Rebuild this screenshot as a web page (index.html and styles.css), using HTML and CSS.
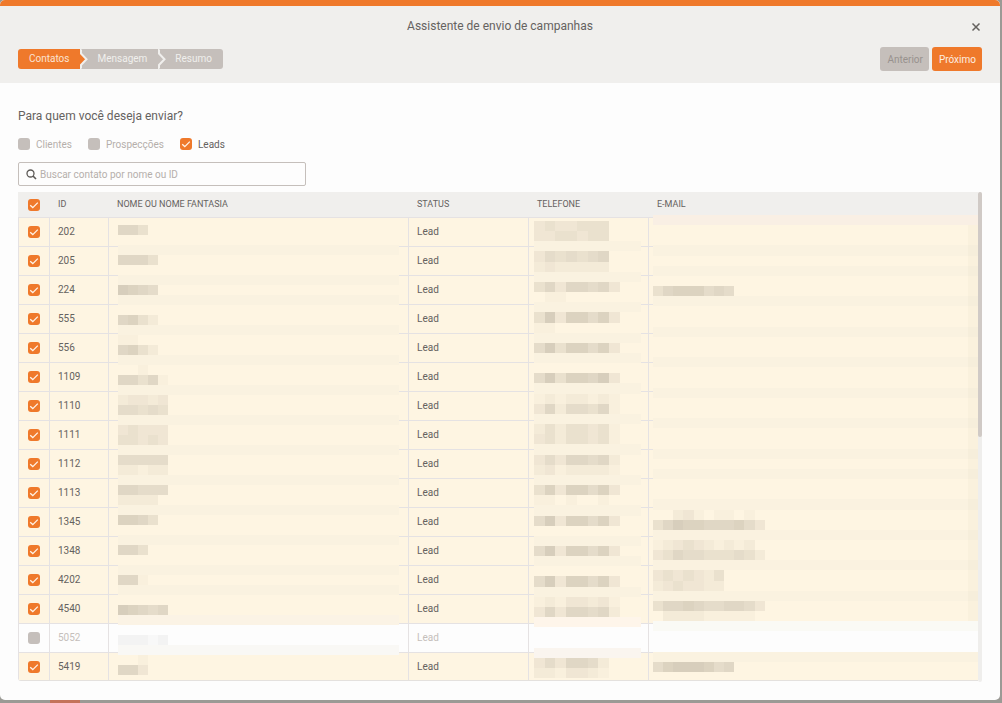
FILE: index.html
```html
<!DOCTYPE html>
<html lang="pt-BR">
<head>
<meta charset="utf-8">
<title>Assistente de envio de campanhas</title>
<link rel="stylesheet" href="styles.css">
</head>
<body>
<main class="modal">
  <header class="modal-header">
    <div class="title-bar">
      <h1 class="title">Assistente de envio de campanhas</h1>
      <button class="close" type="button" aria-label="Fechar">
        <svg width="10" height="10" viewBox="0 0 10 10"><path d="M1.5 1.5l7 7M8.5 1.5l-7 7" stroke="#65625f" stroke-width="1.5" fill="none"/></svg>
      </button>
    </div>
    <div class="toolbar">
      <ol class="steps">
        <li class="step step-active">Contatos
          <svg class="step-arrow" width="8" height="20" viewBox="0 0 8 20"><path d="M0 3L6 10L0 17Z" fill="#ef792b"/><path d="M0 0L1 1.5V4.5L6.5 10.2L1 16V18.5L0 20" fill="none" stroke="#f0efed" stroke-width="2"/></svg>
        </li>
        <li class="step">Mensagem
          <svg class="step-arrow" width="8" height="20" viewBox="0 0 8 20"><path d="M0 3L6 10L0 17Z" fill="#c5bfbb"/><path d="M0 0L1 1.5V4.5L6.5 10.2L1 16V18.5L0 20" fill="none" stroke="#f0efed" stroke-width="2"/></svg>
        </li>
        <li class="step">Resumo</li>
      </ol>
      <div class="actions">
        <button class="btn btn-muted" type="button">Anterior</button>
        <button class="btn btn-primary" type="button">Próximo</button>
      </div>
    </div>
  </header>
  <section class="content">
    <h2 class="question">Para quem você deseja enviar?</h2>
    <div class="filters">
      <label class="filter"><input class="check" type="checkbox">Clientes</label>
      <label class="filter"><input class="check" type="checkbox">Prospecções</label>
      <label class="filter filter-on"><input class="check" type="checkbox" checked>Leads</label>
    </div>
    <label class="search">
      <svg width="11" height="11" viewBox="0 0 11 11"><circle cx="4.5" cy="4.5" r="3.5" fill="none" stroke="#5d5a57" stroke-width="1.3"/><path d="M7 7l3 3" stroke="#5d5a57" stroke-width="1.6"/></svg>
      <input class="search-input" type="text" placeholder="Buscar contato por nome ou ID" aria-label="Buscar contato por nome ou ID">
    </label>
    <div class="table-frame">
      <div class="table-wrap">
        <table class="contacts">
          <colgroup><col class="col-check"><col class="col-id"><col class="col-name"><col class="col-status"><col class="col-phone"><col></colgroup>
          <thead>
            <tr><th><input class="check" type="checkbox" checked aria-label="Selecionar todos"></th><th>ID</th><th>NOME OU NOME FANTASIA</th><th>STATUS</th><th>TELEFONE</th><th>E-MAIL</th></tr>
          </thead>
          <tbody id="rows"></tbody>
        </table>
        <svg class="mask mask-name" id="mask-name"></svg>
        <svg class="mask mask-phone" id="mask-phone"></svg>
        <svg class="mask mask-email" id="mask-email"></svg>
      </div>
      <div class="scroll-track"><div class="scroll-thumb"></div></div>
    </div>
  </section>
</main>
<script src="app.js"></script>
</body>
</html>
```
FILE: styles.css
```css
* { box-sizing: border-box; }
body {
  margin: 0;
  min-height: 100vh;
  display: flex;
  padding: 0 2px 3px 0;
  background: linear-gradient(90deg, #9b9a95 5%, #c4725a 5%, #c4725a 8%, #9b9a95 8%) bottom / 100% 3px no-repeat, #9b9a95;
  font-family: Roboto, "Liberation Sans", sans-serif;
  font-size: 10px;
  color: #65625f;
}
.modal {
  flex: 1;
  display: flex;
  flex-direction: column;
  background: #fdfdfd;
  border-radius: 5px;
  overflow: hidden;
}
.modal-header {
  background: #f0efed;
  border-top: 6px solid #ef792b;
  padding: 0 18px 12px;
}
.title-bar {
  display: grid;
  grid-template-columns: 1fr auto 1fr;
  align-items: center;
  height: 41px;
}
.title {
  grid-column: 2;
  margin: 0;
  padding-bottom: 2px;
  font-size: 12px;
  font-weight: 400;
}
.close {
  justify-self: end;
  display: flex;
  padding: 0;
  border: 0;
  margin-right: 1px;
  background: none;
}
.toolbar {
  display: flex;
  justify-content: space-between;
  align-items: center;
}
.steps {
  display: flex;
  list-style: none;
  margin: 0;
  padding: 0;
}
.step {
  position: relative;
  height: 20px;
  padding: 0 11px 0 17px;
  line-height: 20px;
  background: #c5bfbb;
  color: #f0efed;
}
.step-active { padding-left: 11px; background: #ef792b; color: #fbe3d2; }
.step:first-child { border-radius: 3px 0 0 3px; }
.step:last-child { border-radius: 0 3px 3px 0; }
.step-arrow { position: absolute; left: 100%; top: 0; z-index: 1; }
.actions { display: flex; gap: 3px; }
.btn {
  height: 24px;
  padding: 0 6px 0 7px;
  border: 0;
  border-radius: 3px;
  font: inherit;
}
.btn-muted { background: #c5bfbb; color: #98928e; }
.btn-primary { background: #ef792b; color: #fdeee2; }
.content {
  flex: 1;
  display: flex;
  flex-direction: column;
  padding: 24px 18px 18px;
}
.question {
  margin: 0;
  font-size: 12px;
  font-weight: 400;
  line-height: 18px;
}
.filters {
  display: flex;
  gap: 16px;
  margin-top: 12px;
  height: 14px;
}
.filter {
  display: flex;
  align-items: center;
  gap: 6px;
  color: #b5afab;
}
.filter-on { color: #65625f; }
.check {
  appearance: none;
  display: block;
  width: 12px;
  height: 12px;
  margin: 0;
  border-radius: 3px;
  background: #c5bfbb;
}
.check:checked {
  background: #ef792b url("data:image/svg+xml,%3Csvg xmlns='http://www.w3.org/2000/svg' viewBox='0 0 12 12'%3E%3Cpath d='M2.2 6.2L4.8 8.6L9.8 3.6' fill='none' stroke='%23fff3e8' stroke-width='1.3'/%3E%3C/svg%3E");
}
.search {
  display: flex;
  align-items: center;
  gap: 3px;
  width: 288px;
  height: 24px;
  margin: 11px 0 6px;
  padding: 0 7px;
  border: 1px solid #c5bfbb;
  border-radius: 2px;
}
.search-input {
  flex: 1;
  border: 0;
  padding: 0;
  outline: 0;
  background: none;
  font: inherit;
}
.search-input::placeholder { color: #b5afab; }
.table-frame { flex: 1; display: flex; }
.table-wrap {
  position: relative;
  flex: 1;
  margin-bottom: 1px;
  border-bottom: 1px solid #e4e1de;
  border-radius: 0 0 0 3px;
  overflow: hidden;
}
.contacts {
  width: 100%;
  table-layout: fixed;
  border-collapse: separate;
  border-spacing: 0;
}
.col-check { width: 32px; }
.col-id { width: 59px; }
.col-name { width: 300px; }
.col-status, .col-phone { width: 120px; }
.contacts th {
  height: 26px;
  padding: 0 8px 2px;
  background: #f0efed;
  border-bottom: 1px solid #e5e2e3;
  font-size: 9px;
  font-weight: 400;
  text-align: left;
}
.contacts td {
  height: 29px;
  padding: 0 8px 2px;
  background: #fef5e2;
  border-right: 1px solid #e5e2e3;
  border-bottom: 1px solid #e5e2e3;
}
.contacts td:last-child { border-right: 0; }
.contacts tr > :first-child { padding: 0 0 0 10px; }
.contacts td:first-child { padding: 0 0 0 9px; border-left: 1px solid #e5e2e3; }
.contacts tbody tr:last-child td { height: 27px; padding-bottom: 0; border-bottom: 0; }
.contacts .row-off td { background: #fdfdfd; color: #c5bfbb; }
.mask { position: absolute; top: 0; height: 100%; }
.mask-name { left: 100px; width: 281px; }
.mask-phone { left: 516px; width: 107px; }
.mask-email { left: 635px; width: calc(100% - 635px); }
.scroll-track { width: 4px; background: #efeeec; border-radius: 2px; }
.scroll-thumb { height: 50%; background: #d0cac6; border-radius: 2px; }
```
FILE: app.js
```js
const ids = [202, 205, 224, 555, 556, 1109, 1110, 1111, 1112, 1113, 1345, 1348, 4202, 4540, 5052, 5419];
const unchecked = 5052;

document.getElementById("rows").innerHTML = ids.map(id => `
  <tr class="${id === unchecked ? "row-off" : ""}">
    <td><input class="check" type="checkbox" aria-label="Selecionar ${id}"${id === unchecked ? "" : " checked"}></td>
    <td>${id}</td><td></td><td>Lead</td><td></td><td></td>
  </tr>`).join("");

// Private data is covered by mosaics. Each line is [top, height, shade per tile].
const masks = {
  "mask-name": {
    tile: 10,
    bands: [[53,10],[83,10],[103,10],[133,10],[163,10],[193,10],[223,10],[253,10],[283,10],[313,10],[343,10],[373,10],[393,10],[423,10,"#fbf3e5"],[453,10,"#f9f8f5"]],
    clear: [[27,26],[63,20],[93,10],[113,20],[143,20],[173,20],[203,20],[233,20],[263,20],[293,20],[323,20],[353,20],[383,10],[403,20],[463,24]],
    off: [[433,20]],
    lines: [[33,10,"664"],[63,10,"6664"],[93,10,"8765"],[123,10,"6742"],[143,10,"11"],[153,10,"6742"],[173,10,"00100"],[183,10,"66461"],[203,10,"23323"],[213,10,"55454"],[233,10,"34333"],[243,10,"44343"],[263,10,"55555"],[273,10,"22122"],[293,10,"66555"],[303,10,"2222"],[323,10,"7764"],[353,10,"664"],[383,10,"661"],[413,10,"87656"],[443,10,"22212"],[463,10,"001"],[473,10,"663"]]
  },
  "mask-phone": {
    tile: 10.7,
    bands: [[49,10],[80,10],[110,10],[141,10],[161,10],[191,11],[222,10],[252,11],[283,10],[313,11],[344,10],[364,10],[395,10],[425,10,"#fef5ea"],[456,10,"#faf5ef"]],
    clear: [[27,22],[59,21],[90,20],[120,21],[151,10],[171,20],[202,20],[232,20],[263,20],[293,20],[324,20],[354,10],[374,21],[405,20],[466,21]],
    off: [[435,21]],
    lines: [[29,10,"3433444"],[39,10,"3344344"],[59,11,"3545456"],[70,10,"2322222"],[90,10,"46366563"],[100,10,"011"],[120,11,"48377573"],[131,10,"11"],[151,10,"58477573"],[181,10,"58477683"],[202,10,"12122121"],[212,10,"36255461"],[232,10,"24244341"],[242,10,"34244341"],[263,10,"35366562"],[273,10,"23122221"],[293,10,"47377573"],[303,10,"11010010"],[324,10,"58377573"],[354,10,"58377573"],[384,11,"58377573"],[405,10,"12133231"],[415,10,"36366562"],[466,10,"3536652"],[476,10,"2213321"]]
  },
  "mask-email": {
    tile: 10.15,
    bands: [[23,10,"#f9efe4"],[53,11],[74,10],[104,10],[135,10],[165,10],[196,10],[226,10],[257,10],[277,10],[307,11],[338,10],[368,10],[399,10],[429,10,"#fafaf5"],[460,10]],
    clear: [[33,20],[64,10],[84,20],[114,21],[145,20],[175,21],[206,20],[236,21],[267,10],[287,20],[318,20],[348,20],[378,21],[409,20],[470,17]],
    off: [[439,21]],
    lines: [[94,10,"46777565"],[318,10,"00231011010"],[328,10,"46877666753"],[348,10,"12343212120"],[358,10,"34655444542"],[378,11,"3434324"],[389,10,"2343322"],[409,10,"46676556653"],[419,10,"02222111110"],[470,10,"57888756"]]
  }
};

const rect = (x, y, w, h, fill, alpha = 1) =>
  `<rect x="${x}" y="${y}" width="${w}" height="${h}" fill="${fill}" fill-opacity="${alpha}"/>`;

for (const [id, m] of Object.entries(masks)) {
  let out = "";
  m.clear.forEach(([y, h]) => out += rect(0, y, "100%", h, "#fef5e2"));
  m.off.forEach(([y, h]) => out += rect(0, y, "100%", h, "#fdfdfd"));
  m.bands.forEach(([y, h, fill]) => out += rect(0, y, "100%", h, fill || "#faf2e0"));
  m.lines.forEach(([y, h, shades]) => [...shades].forEach((s, i) => {
    const x = Math.round(i * m.tile);
    const w = Math.round((i + 1) * m.tile) - x;
    const ink = y === 443 ? "#505050" : "#504838";
    if (s > 0) out += rect(x, y, w, h, ink, (s * 0.028).toFixed(3));
  }));
  const el = document.getElementById(id);
  if (id === "mask-email") {
    out += `<svg x="100%" overflow="visible">${rect(-10, 33, 10, 396, "#504838", 0.025)}</svg>`;
  }
  el.innerHTML = out;
}
```
